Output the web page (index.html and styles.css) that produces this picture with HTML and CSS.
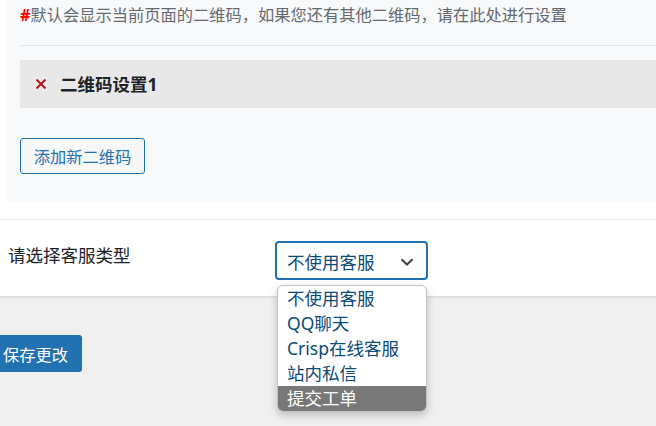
FILE: index.html
```html
<!DOCTYPE html>
<html lang="zh-CN">
<head>
    <meta charset="UTF-8">
    <meta name="viewport" content="width=device-width, initial-scale=1.0">
    <title>设置</title>
    <link rel="stylesheet" href="styles.css">
</head>
<body>
    <div class="settings">
        <div class="qr-panel">
            <p class="desc"><span class="hash">#</span>默认会显示当前页面的二维码，如果您还有其他二维码，请在此处进行设置</p>
            <hr class="sep">
            <div class="qr-item">
                <span class="remove">
                    <svg width="12" height="10" viewBox="0 0 12 10"><path d="M1.5 0.5 L10.5 9.5 M10.5 0.5 L1.5 9.5" stroke="#b0141a" stroke-width="2" fill="none"/></svg>
                </span>
                <span class="qr-title">二维码设置1</span>
            </div>
            <button class="btn-add" type="button">添加新二维码</button>
        </div>

        <div class="row">
            <label class="row-label">请选择客服类型</label>
            <div class="field">
                <div class="select">
                    <span>不使用客服</span>
                    <svg width="14" height="8" viewBox="0 0 14 8"><path d="M1.5 1.2 L7 6.5 L12.5 1.2" stroke="#3c434a" stroke-width="2" fill="none"/></svg>
                </div>
                <ul class="listbox">
                    <li>不使用客服</li>
                    <li>QQ聊天</li>
                    <li>Crisp在线客服</li>
                    <li>站内私信</li>
                    <li class="active">提交工单</li>
                </ul>
            </div>
        </div>
    </div>

    <div class="actions">
        <button class="btn-save" type="submit">保存更改</button>
    </div>
</body>
</html>
```

FILE: styles.css
```css
html {
    background: #f0f0f1;
}

body {
    margin: 0;
    min-height: 426px;
    background: #f0f0f1;
    font-family: "Noto Sans", "Noto Sans CJK SC", sans-serif;
}

.settings {
    position: relative;
    z-index: 2;
    background: #fff;
    border-bottom: 1px solid #dcdcde;
    box-shadow: 0 1px 2px rgba(0, 0, 0, 0.06);
}

.qr-panel {
    margin-left: 7px;
    padding: 3px 0 28px;
    background: #f8f9fa;
}

.desc {
    margin: 0 0 0 13px;
    font-size: 16.25px;
    line-height: 24px;
    color: #646970;
}

.hash {
    color: #ff0000;
    font-weight: bold;
}

.sep {
    margin: 18px 0 14px 13px;
    border: 0;
    border-top: 1px solid #e2e4e7;
}

.qr-item {
    display: flex;
    align-items: center;
    height: 48px;
    margin-left: 13px;
    padding-left: 15px;
    background: #e8e8e8;
}

.remove {
    display: flex;
    margin-right: 13px;
}

.qr-title {
    font-size: 17.5px;
    font-weight: 700;
    color: #1d2327;
    line-height: 24px;
}

.btn-add {
    display: block;
    margin: 30px 0 0 13px;
    width: 125px;
    height: 36px;
    padding: 0;
    border: 1px solid #2271b1;
    border-radius: 3px;
    background: #f6f7f7;
    color: #2271b1;
    font-family: inherit;
    font-size: 16.25px;
}

.row {
    display: flex;
    margin-top: 17px;
    border-top: 1px solid #ececec;
    padding: 21px 0 16px 8px;
}

.row-label {
    width: 267px;
    margin-top: 2px;
    font-size: 17.5px;
    line-height: 24px;
    color: #1d2327;
}

.field {
    position: relative;
}

.select {
    display: flex;
    align-items: center;
    justify-content: space-between;
    box-sizing: border-box;
    width: 153px;
    height: 39px;
    padding: 2px 12px 0 10px;
    border: 2px solid #2271b1;
    border-radius: 4px;
    font-size: 17.5px;
    color: #0a4b78;
}

.listbox {
    position: absolute;
    z-index: 10;
    top: 44px;
    left: 2px;
    width: 150px;
    margin: 0;
    padding: 0;
    list-style: none;
    box-sizing: border-box;
    background: #fff;
    border: 1px solid #c3c4c7;
    border-radius: 6px;
    overflow: hidden;
    box-shadow: 0 3px 9px rgba(0, 0, 0, 0.22);
}

.listbox li {
    height: 25px;
    padding-left: 9px;
    font-size: 17.5px;
    line-height: 25px;
    color: #0a4b78;
}

.listbox li.active {
    background: #787878;
    color: #fff;
}

.actions {
    padding-top: 38px;
}

.btn-save {
    margin-left: -11px;
    height: 37px;
    padding: 0 14px;
    border: 0;
    border-radius: 3px;
    background: #2271b1;
    color: #fff;
    font-family: inherit;
    font-size: 16.25px;
}
```
